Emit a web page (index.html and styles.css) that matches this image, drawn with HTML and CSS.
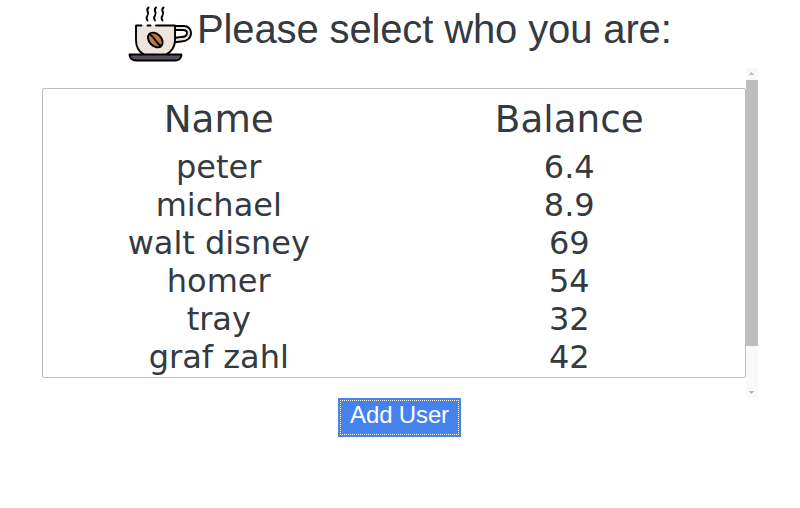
FILE: index.html
```html
<!DOCTYPE html>
<html lang="en">
<head>
<meta charset="utf-8">
<title>Select user</title>
<link rel="stylesheet" href="styles.css">
</head>
<body>
<header class="header">
  <svg class="logo" viewBox="0 0 64 56" preserveAspectRatio="none" width="64" height="56" fill="none" stroke="#000" stroke-width="1.9" stroke-linecap="round" stroke-linejoin="round">
    <path d="M20.500 1.500c-4 4 2 4-1 8-1.500 2-1.500 3 0 5M28 1.500c-4 4 2 4-1 8-1.500 2-1.500 3 0 5M35.500 1.500c-4 4 2 4-1 8-1.500 2-1.500 3 0 5"/>
    <path fill="#ede5dc" d="M46 20H56C60 20 63 23 63 27C63 32 59 35.500 53 35.500L45 36.500L46 32L53 31C57 31 59 29.500 59 27C59 25 57.500 24 55 24H47Z"/>
    <path fill="#ede5dc" stroke="none" d="M8 19.500H47V34C47 41 43 48 37 49H17C11 46 8 41 8 34Z"/>
    <path d="M13.500 19.500H8V34C8 41 11 46 16 48.500M19.500 19.500H22.500M28 19.500H47V34C47 41 43 46 38 48.500"/>
    <g transform="translate(27.300 34) rotate(45)">
      <ellipse rx="8.500" ry="6" fill="#c77842"/>
      <path d="M-8 0C-4-2 3 2 8 0"/>
    </g>
    <path fill="#5b5060" d="M1.500 48.500H53.500C53.500 52 51 54.500 47 54.500H8C4 54.500 1.500 52 1.500 48.500Z"/>
  </svg>
  <h1 class="title">Please select who you are:</h1>
</header>
<main class="list">
  <div class="frame">
    <table class="users">
      <thead><tr><th>Name</th><th>Balance</th></tr></thead>
      <tbody>
        <tr><td>peter</td><td>6.4</td></tr>
        <tr><td>michael</td><td>8.9</td></tr>
        <tr><td>walt disney</td><td>69</td></tr>
        <tr><td>homer</td><td>54</td></tr>
        <tr><td>tray</td><td>32</td></tr>
        <tr><td>graf zahl</td><td>42</td></tr>
      </tbody>
    </table>
  </div>
  <div class="scrollbar">
    <svg class="arrow" viewBox="0 0 12 12" width="12" height="12"><path fill="#bebebe" d="M5 4h1v1h1v1h1v1H3V6h1V5h1z"/></svg>
    <div class="thumb"></div>
    <svg class="arrow arrow-down" viewBox="0 0 12 12" width="12" height="12"><path fill="#bebebe" d="M3 5h5v1H7v1H6v1H5V7H4V6H3z"/></svg>
  </div>
</main>
<button class="add"><span class="focus">Add User</span></button>
</body>
</html>
```
FILE: styles.css
```css
* { box-sizing: border-box; }
body {
  margin: 0;
  background: #fff;
  color: #343a40;
  font-family: "Liberation Sans", Arial, sans-serif;
}
.header {
  display: flex;
  height: 68px;
  padding: 6px 0 0 127.5px;
}
.logo { flex: none; }
.title {
  margin: 0 0 0 5.5px;
  font-size: 40px;
  font-weight: 400;
  line-height: 46px;
  letter-spacing: -0.13px;
  white-space: nowrap;
}
.list {
  display: flex;
  height: 330px;
  margin-left: 42px;
}
.frame {
  width: 704px;
  height: 290px;
  margin-top: 20px;
  border: 1px solid #bebebe;
  border-radius: 2px;
}
.users {
  width: 701px;
  margin-left: 0.5px;
  table-layout: fixed;
  border-collapse: collapse;
  font-family: "DejaVu Sans", sans-serif;
  text-align: center;
}
.users th {
  height: 59px;
  padding: 2px 0 0;
  font-size: 37.33px;
  font-weight: 400;
  line-height: 57px;
}
.users td {
  height: 38px;
  padding: 0;
  font-size: 32px;
  line-height: 38px;
}
.scrollbar {
  display: flex;
  flex-direction: column;
  width: 12px;
  background: #f8f9fa;
}
.arrow { flex: none; }
.arrow-down { margin-top: auto; }
.thumb {
  height: 266px;
  background: #bebebe;
}
.add {
  display: block;
  width: 123px;
  height: 39px;
  margin-left: 338px;
  padding: 2px;
  border: 0;
  background: #4582ec;
  color: #fff;
  font: 24px/28px "Liberation Sans", Arial, sans-serif;
  letter-spacing: -0.15px;
}
.focus {
  display: block;
  height: 35px;
  border: 1px dotted #fff;
}
```
